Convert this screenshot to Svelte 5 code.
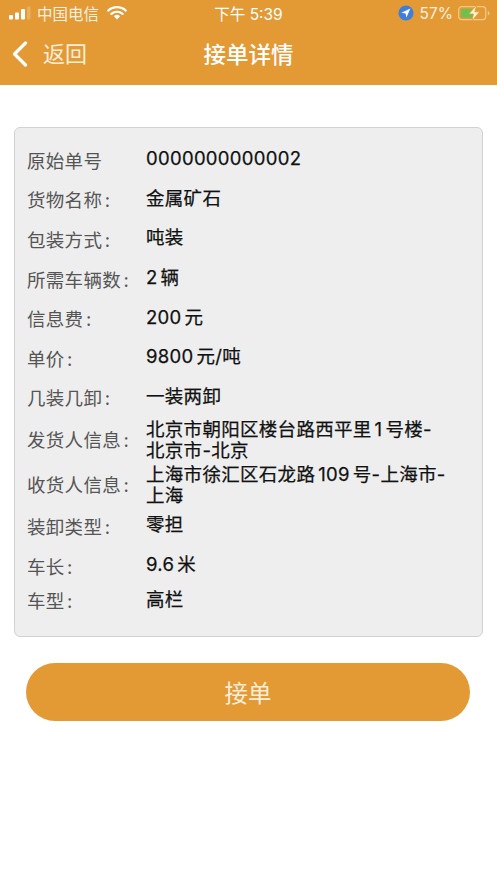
<script lang="ts">
	const rows = [
		{ label: '原始单号', value: '0000000000002', size: 'base' },
		{ label: '货物名称 :', value: '金属矿石', size: 'base' },
		{ label: '包装方式 :', value: '吨装', size: 'base' },
		{ label: '所需车辆数 :', value: '2 辆', size: 'base' },
		{ label: '信息费 :', value: '200 元', size: 'base' },
		{ label: '单价 :', value: '9800 元/吨', size: 'base' },
		{ label: '几装几卸 :', value: '一装两卸', size: 'base' },
		{ label: '发货人信息 :', value: '北京市朝阳区楼台路西平里 1 号楼-北京市-北京', size: 'tall' },
		{ label: '收货人信息 :', value: '上海市徐汇区石龙路 109 号-上海市-上海', size: 'tall' },
		{ label: '装卸类型 :', value: '零担', size: 'base' },
		{ label: '车长 :', value: '9.6 米', size: 'base' },
		{ label: '车型 :', value: '高栏', size: 'short' }
	];
</script>

<div class="page">
	<header>
		<div class="status">
			<div class="status-left">
				<svg width="22" height="14" viewBox="0 0 22 14">
					<rect x="0" y="9" width="4" height="4.5" rx="1" fill="#fff" />
					<rect x="6" y="6.5" width="4" height="7" rx="1" fill="#fff" />
					<rect x="12" y="3" width="4" height="10.5" rx="1" fill="#fff" />
					<rect x="18" y="0.5" width="3.5" height="13" rx="1" fill="#fff" opacity="0.22" />
				</svg>
				<span class="carrier">中国电信</span>
				<svg class="wifi" width="20" height="14" viewBox="0 0 20 14">
					<path d="M1.2 4.6a13 13 0 0 1 17.6 0" fill="none" stroke="#fff" stroke-width="2.2" stroke-linecap="round" />
					<path d="M4.4 7.9a8.4 8.4 0 0 1 11.2 0" fill="none" stroke="#fff" stroke-width="2.2" stroke-linecap="round" />
					<path d="M6.9 10.2a4.6 4.6 0 0 1 6.2 0L10 13.6z" fill="#fff" />
				</svg>
			</div>
			<span class="clock">下午 5:39</span>
			<div class="status-right">
				<svg width="16" height="16" viewBox="0 0 16 16">
					<circle cx="8" cy="8" r="7.6" fill="#3f7fdc" />
					<path d="M12.4 3.6 3.4 7.7l4.2.7.8 4.2z" fill="#fff" />
				</svg>
				<span class="pct">57%</span>
				<svg class="battery" width="32" height="18" viewBox="0 0 32 18">
					<rect x="0.7" y="2.7" width="27" height="13" rx="3" fill="none" stroke="#f2c88c" stroke-width="1.2" />
					<rect x="3" y="5" width="9" height="8.5" rx="1" fill="#6cc24f" />
					<rect x="12" y="5" width="5" height="8.5" fill="#6cc24f" />
					<path d="M29.8 7v4.6a2.4 2.4 0 0 0 0-4.6z" fill="#f2c88c" />
					<path d="M18.8 1 10.8 10h4.6l-1.4 7 7.6-9.2h-4.8z" fill="#fff3d6" stroke="#e39a35" stroke-width="0.8" />
				</svg>
			</div>
		</div>
		<div class="nav">
			<div class="back">
				<svg width="16" height="26" viewBox="0 0 16 26">
					<path d="M13.5 2 2.5 13l11 11" fill="none" stroke="#fff" stroke-width="3.2" stroke-linecap="round" stroke-linejoin="round" />
				</svg>
				<span class="back-text">返回</span>
			</div>
			<h1>接单详情</h1>
		</div>
	</header>

	<main>
		<section class="card">
			{#each rows as row}
				<div class="row {row.size}">
					<span class="label">{row.label}</span>
					<span class="value">{row.value}</span>
				</div>
			{/each}
		</section>
		<button type="button">接单</button>
	</main>
</div>

<style>
	:global(body) {
		margin: 0;
		background: #fff;
	}

	.page {
		min-height: 883px;
		font-family: 'Inter', 'Noto Sans CJK SC', sans-serif;
	}

	header {
		background: #e39a35;
		height: 85px;
		color: #fff;
	}

	.status {
		height: 26px;
		padding: 0 7px 0 9px;
		display: grid;
		grid-template-columns: 1fr auto 1fr;
		align-items: center;
		font-size: 15.5px;
	}

	.status-left {
		display: flex;
		align-items: center;
		gap: 6px;
	}

	.carrier {
		opacity: 0.85;
	}

	.wifi {
		margin-left: 2px;
		margin-top: -1px;
	}

	.clock {
		margin-right: 2px;
	}

	.status-right {
		display: flex;
		align-items: center;
		justify-content: flex-end;
		gap: 6px;
	}

	.pct {
		opacity: 0.85;
	}

	.battery {
		margin-left: -1px;
	}

	.nav {
		position: relative;
		height: 58px;
		margin-top: -2px;
		display: flex;
		align-items: center;
		justify-content: center;
	}

	.back {
		position: absolute;
		left: 12px;
		top: 15px;
		display: flex;
		align-items: center;
		gap: 14px;
		font-size: 22px;
		color: #fbeedb;
	}

	.back-text {
		margin-top: -3px;
		margin-left: 1px;
	}

	h1 {
		margin: 0;
		font-size: 22.5px;
		font-weight: 500;
	}

	main {
		padding: 42px 14px 0;
		display: flex;
		flex-direction: column;
	}

	.card {
		height: 510px;
		box-sizing: border-box;
		padding: 11px 12px 0;
		border: 1px solid #d2d2d2;
		border-radius: 6px;
		background: #eeeeee;
	}

	.row {
		display: grid;
		grid-template-columns: 119px 1fr;
		align-items: center;
		height: 39.6px;
		font-size: 18.5px;
		letter-spacing: 0.3px;
	}

	.row.tall {
		height: 44.5px;
	}

	.row.short {
		height: 30px;
	}

	.label {
		color: #555;
		position: relative;
		top: 1px;
		word-spacing: -3px;
		white-space: nowrap;
	}

	.value {
		color: #111;
		position: relative;
		line-height: 21px;
		word-spacing: -2.5px;
		padding-right: 21px;
		-webkit-text-stroke: 0.25px #111;
	}

	.tall .value {
		top: 2px;
	}

	button {
		margin: 26px 13px 0 12px;
		height: 58px;
		border: none;
		border-radius: 29px;
		background: #e39a35;
		color: #fbeedb;
		font-family: inherit;
		font-size: 23.5px;
	}
</style>
